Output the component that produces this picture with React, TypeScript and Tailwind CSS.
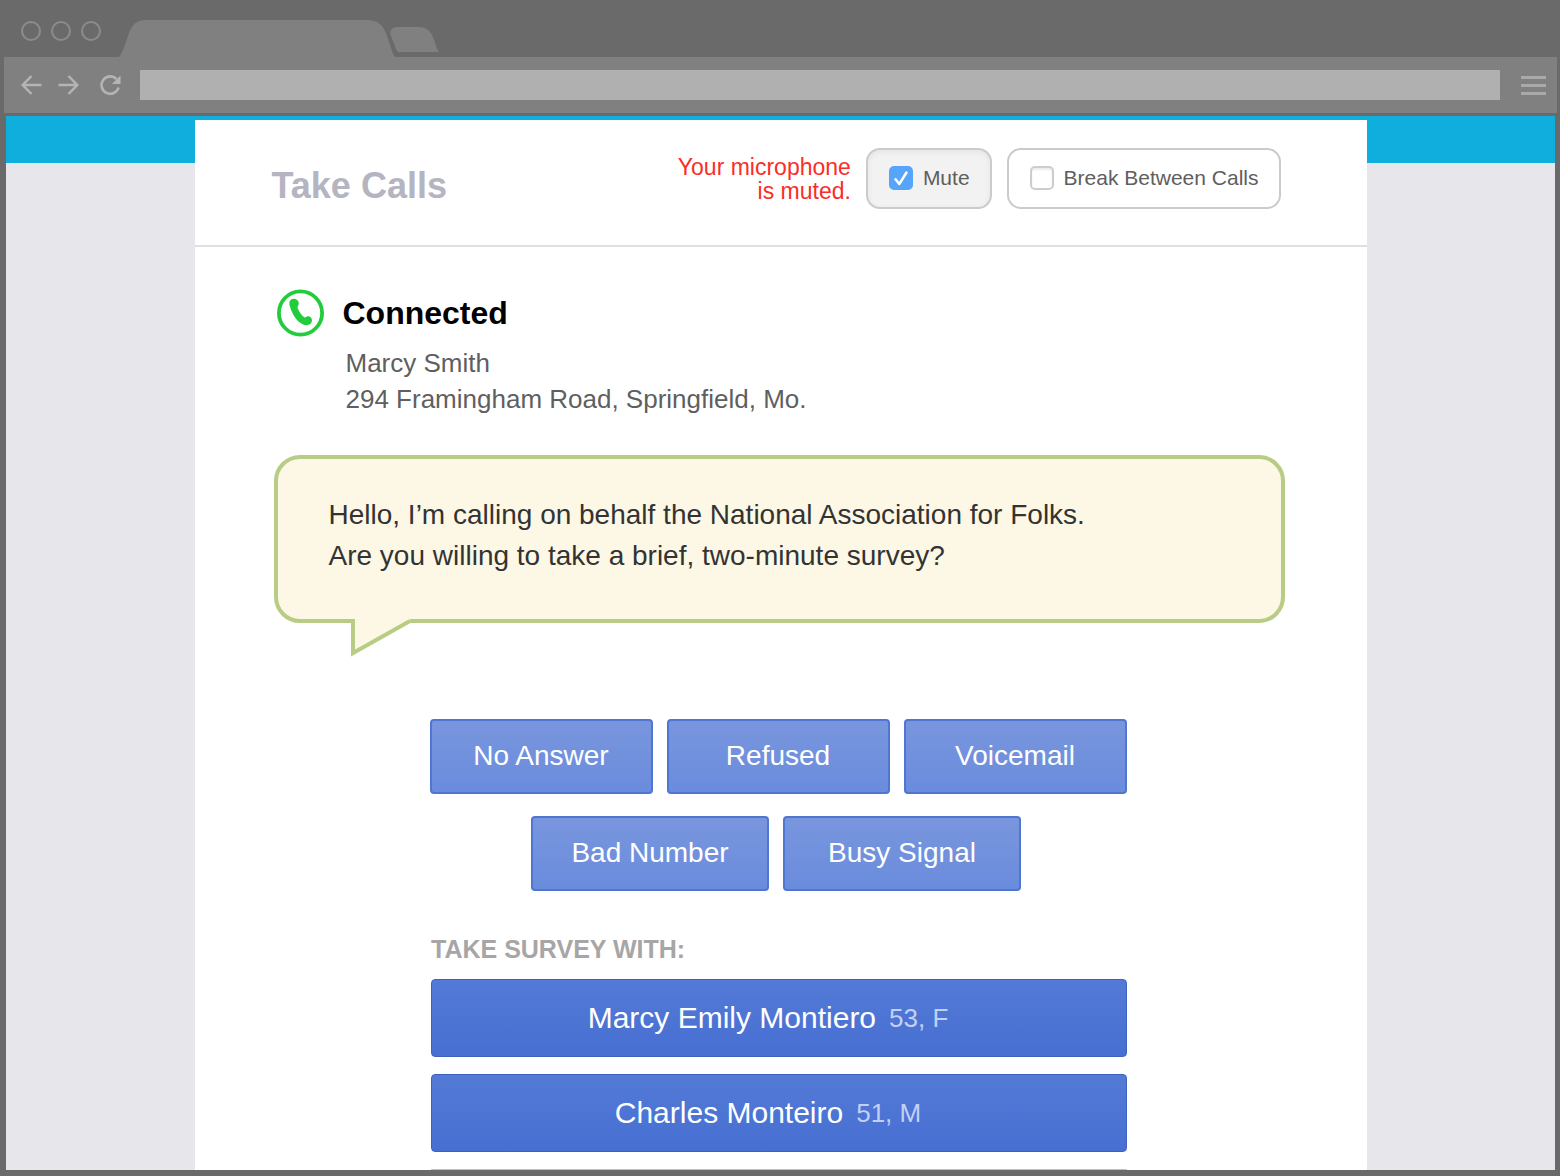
import { useState } from "react";

const outcomesTop = ["No Answer", "Refused", "Voicemail"];
const outcomesBottom = ["Bad Number", "Busy Signal"];
const people = [
  { name: "Marcy Emily Montiero", detail: "53, F" },
  { name: "Charles Monteiro", detail: "51, M" },
];

function TabStrip() {
  return (
    <div className="flex h-[57px] items-end">
      <div className="flex gap-2.5 self-start pt-[21px] pl-[21px]">
        <span className="size-5 rounded-full border-2 border-[#8c8c8c]" />
        <span className="size-5 rounded-full border-2 border-[#8c8c8c]" />
        <span className="size-5 rounded-full border-2 border-[#8c8c8c]" />
      </div>
      <svg className="ml-[18px]" width="321" height="37" viewBox="0 0 321 37" aria-hidden="true">
        <path d="M0 37 C3 34 5 27 8 19 C12 7 15 0 28 0 H247 C260 0 264 5 268 16 C271 24 273 33 276 37 Z" fill="#808080" />
        <path d="M279 32 C277 30 275 23 272 16 C270 10 273 7 279 7 H299 C308 7 312 11 315 20 C317 26 318 29 320 32 Z" fill="#808080" />
      </svg>
    </div>
  );
}

function Toolbar() {
  return (
    <div className="mr-[3px] ml-1 flex h-14 items-center bg-[#808080] pr-[11px] pl-[17px] text-[#b4b4b4]">
      <button type="button" aria-label="Back">
        <svg width="21" height="20" viewBox="0 0 21 20" fill="none" stroke="currentColor" strokeWidth="2.5">
          <path d="M20.5 10H2M10.5 1L1.7 10l8.8 9" />
        </svg>
      </button>
      <button type="button" aria-label="Forward" className="ml-4">
        <svg width="21" height="20" viewBox="0 0 21 20" fill="none" stroke="currentColor" strokeWidth="2.5">
          <path d="M0.5 10H19M10.5 1l8.8 9-8.8 9" />
        </svg>
      </button>
      <button type="button" aria-label="Reload" className="ml-[21px]">
        <svg width="21" height="20" viewBox="0 0 21 20" fill="none">
          <path d="M18.6 12.5A8.7 8.7 0 1 1 16.5 4" stroke="currentColor" strokeWidth="2.6" />
          <path d="M20.5 0.5V9H12Z" fill="currentColor" />
        </svg>
      </button>
      <input type="text" aria-label="Address" className="ml-[19px] h-[30px] min-w-0 flex-1 bg-[#b0b0b0] px-3 text-lg text-[#555] outline-none" />
      <button type="button" aria-label="Menu" className="ml-[21px] flex flex-col gap-[5px]">
        <span className="h-[3px] w-[25px] bg-[#a9a9a9]" />
        <span className="h-[3px] w-[25px] bg-[#a9a9a9]" />
        <span className="h-[3px] w-[25px] bg-[#a9a9a9]" />
      </button>
    </div>
  );
}

function Toggle({ label, initial }: { label: string; initial: boolean }) {
  const [on, setOn] = useState(initial);
  return (
    <label
      className={
        "flex h-[61px] items-center gap-2.5 rounded-[14px] border-2 border-[#cbcbcb] pr-5 pb-0.5 pl-[21px] text-[21px] leading-6 text-[#5e5e5e] " +
        (on ? "bg-[#f2f2f2] shadow-[inset_0_2px_6px_rgba(0,0,0,0.06)]" : "bg-white")
      }
    >
      <span className="relative flex size-6">
        <input
          type="checkbox"
          checked={on}
          onChange={(e) => setOn(e.target.checked)}
          className="size-6 appearance-none rounded-[5px] border-2 border-[#cdcdcd] bg-white shadow-[inset_0_2px_2px_rgba(0,0,0,0.08)] checked:border-[#57a5fb] checked:bg-[#57a5fb] checked:shadow-none"
        />
        {on && (
          <svg className="pointer-events-none absolute inset-0" width="24" height="24" viewBox="0 0 24 24" fill="none" aria-hidden="true">
            <path d="M6.5 13.2L10.3 18L17.5 6.5" stroke="#fff" strokeWidth="2.5" strokeLinecap="round" strokeLinejoin="round" />
          </svg>
        )}
      </span>
      {label}
    </label>
  );
}

const outcomeBase =
  "h-[75px] rounded-[4px] border-2 border-[#4f76d0] bg-linear-to-b from-[#7996dd] to-[#6a8cdd] pb-0.5 text-[28px] leading-8 text-white ";

export default function App() {
  return (
    <div className="min-h-screen bg-[#6a6a6a] pb-1.5 font-['Liberation_Sans',Arial,sans-serif]">
      <TabStrip />
      <Toolbar />
      <div className="mt-[3px] mr-[5px] ml-1.5 bg-[linear-gradient(to_bottom,#10aedd_47px,#e7e6eb_47px)] pt-1">
        <main className="mx-auto w-full max-w-[1172px] bg-white">
          <header className="flex items-end border-b-2 border-[#e0e0e0] pt-7 pr-[86px] pb-9 pl-[77px]">
            <h1 className="text-[36px] leading-[46px] font-bold text-[#b5b4c1]">Take Calls</h1>
            <div className="ml-auto flex items-center gap-[15px]">
              <p className="text-right text-[23px] leading-6 text-[#fb2d27]">
                Your microphone
                <br />
                is muted.
              </p>
              <Toggle label="Mute" initial={true} />
              <Toggle label="Break Between Calls" initial={false} />
            </div>
          </header>

          <div className="pt-[41px] pr-[82px] pl-[79px]">
            <section className="pl-[3px]">
              <div className="flex items-center gap-[19px]">
                <svg width="47" height="48" viewBox="0 0 47 48" fill="none" aria-hidden="true">
                  <circle cx="23.5" cy="24" r="21.6" stroke="#22cc3a" strokeWidth="3.8" />
                  <path
                    d="M12.8 17C11.5 12.5 13.5 9.6 17 9.8C20.8 10 23 13.8 21.2 16.6C20.3 18 20.4 18.6 21 20C22.3 23 24.4 25.8 26.6 27.8C27.6 28.7 28.2 28.5 29.5 27.7C32.2 26.1 35.6 28.8 34.9 32.3C34.1 36.1 30 37 26 35.4C19.5 32.6 15 24.8 12.8 17Z"
                    fill="#22cc3a"
                  />
                </svg>
                <h2 className="text-[32px] leading-[50px] font-bold text-black">Connected</h2>
              </div>
              <p className="mt-[7px] pl-[69px] text-[26px] leading-9 text-[#5f5f5f]">
                Marcy Smith
                <br />
                294 Framingham Road, Springfield, Mo.
              </p>
            </section>

            <section className="relative mt-[38px] h-[168px] rounded-[26px] border-4 border-[#b9cc86] bg-[#fdf8e5] pt-[35px] pl-[51px]">
              <p className="text-[28px] leading-[41px] text-[#333]">
                Hello, I’m calling on behalf the National Association for Folks.
                <br />
                Are you willing to take a brief, two-minute survey?
              </p>
              <svg className="absolute top-[159px] left-[73px]" width="62" height="40" viewBox="0 0 62 40" fill="none" aria-hidden="true">
                <path d="M2 0V35L59 3V0Z" fill="#fdf8e5" />
                <path d="M0 1H2V3H0Z" fill="#b9cc86" />
                <path d="M2 1V35L59 3" stroke="#b9cc86" strokeWidth="4" />
              </svg>
            </section>

            <section className="mt-24 flex flex-col gap-[22px]">
              <div className="flex justify-center gap-[14px] pr-0.5">
                {outcomesTop.map((o) => (
                  <button key={o} type="button" className={outcomeBase + "w-[223px]"}>
                    {o}
                  </button>
                ))}
              </div>
              <div className="flex justify-center gap-[14px] pr-1.5">
                {outcomesBottom.map((o) => (
                  <button key={o} type="button" className={outcomeBase + "w-[238px]"}>
                    {o}
                  </button>
                ))}
              </div>
            </section>

            <section className="mx-auto mt-10 max-w-[696px]">
              <h3 className="text-[25px] leading-9 font-bold text-[#a6a6a6]">TAKE SURVEY WITH:</h3>
              <div className="mt-3 flex flex-col gap-[17px]">
                {people.map((p) => (
                  <button
                    key={p.name}
                    type="button"
                    className="flex h-[78px] items-center justify-center gap-[13px] rounded-[4px] border border-[#3c62bd] bg-linear-to-b from-[#537ad6] to-[#476fd2] pr-[22px] text-[30px] leading-9 text-white"
                  >
                    <span>{p.name}</span>
                    <span className="text-[26px] text-[#c3d0f5]">{p.detail}</span>
                  </button>
                ))}
                <div className="h-px rounded-t-[4px] bg-[#b5c2dc]" />
              </div>
            </section>
          </div>
        </main>
      </div>
    </div>
  );
}
